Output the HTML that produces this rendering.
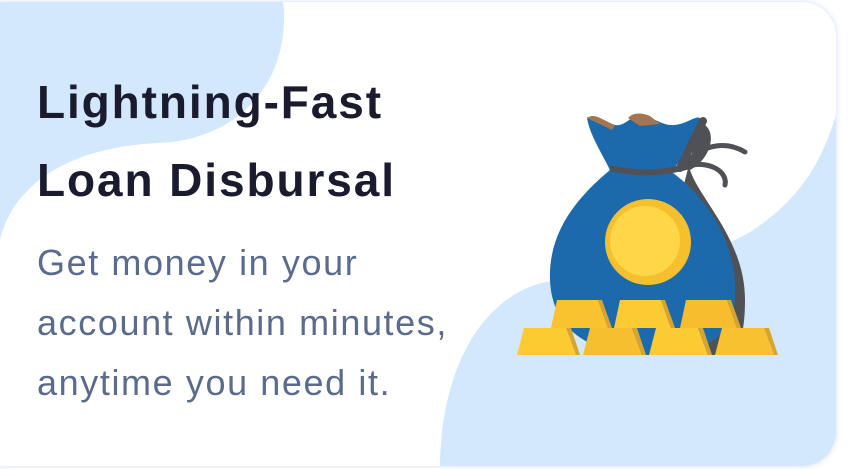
<!DOCTYPE html>
<html><head><style>
html,body{margin:0;padding:0;background:#fff;}
body{width:849px;height:469px;overflow:hidden;position:relative;font-family:"Liberation Sans",sans-serif;}
.card{position:absolute;left:-30px;top:2px;width:866px;height:464px;border-radius:34px;overflow:hidden;background:#fff;box-shadow:0 0 6px rgba(200,210,250,.8);}
svg.bg{position:absolute;left:0;top:0;}
h1{position:absolute;left:37px;top:63px;margin:0;font-size:46px;line-height:78px;font-weight:bold;color:#1a1b2e;letter-spacing:1.9px;}
p{position:absolute;left:37px;top:233px;margin:0;font-size:36px;line-height:60px;color:#5a6b8c;letter-spacing:1.6px;}
</style></head><body>
<div class="card"></div>
<svg class="bg" width="849" height="469" viewBox="0 0 849 469">
<defs><clipPath id="c"><rect x="-30" y="2" width="866" height="464" rx="34"/></clipPath></defs>
<g clip-path="url(#c)">
<path d="M0,0 H283 C292,80 240,140 158,143 C60,148 12,190 0,240 Z" fill="#d3e8fd"/>
<path d="M440,469 C440,360 490,285 560,280 C650,275 700,260 750,232 C800,200 825,160 840,100 V469 Z" fill="#d3e8fd"/>
</g>
<path d="M700,122 C720,130 710,160 690,170 C700,200 745,240 745,300 C745,330 740,350 730,355 L640,355 Z" fill="#505156"/>
<path d="M587,118 C595,112 605,122 615,125 C625,127 632,114 642,115 C650,116 660,124 670,125 C685,126 695,115 700,118 L702,128 C690,145 680,160 672,172 C715,205 738,250 735,300 C732,340 700,355 650,355 C590,355 552,330 550,280 C548,230 580,195 610,170 C600,150 590,135 587,118 Z" fill="#1c6aab"/>
<path d="M703,121 L680,168" stroke="#505156" stroke-width="8" stroke-linecap="round" fill="none"/>
<path d="M587,118 C595,112 605,122 615,125 L612,130 Z M628,118 C632,113 640,112 650,116 L660,124 L640,126 Z" fill="#a37650"/>
<path d="M610,168 C640,175 665,173 690,166" stroke="#505156" stroke-width="6" fill="none"/>
<path d="M685,165 C700,145 725,140 745,152" stroke="#505156" stroke-width="5" fill="none" stroke-linecap="round"/>
<path d="M687,166 C710,160 728,172 725,185" stroke="#505156" stroke-width="5" fill="none" stroke-linecap="round"/>
<circle cx="648" cy="242" r="43" fill="#f6bf2e"/>
<circle cx="645" cy="241" r="35" fill="#fdd748"/>
<g>
<path d="M557,300 H598 L608,328 H551 Z" fill="#f9c32f"/><path d="M598,300 H602 L612,328 H608 Z" fill="#d6a530"/>
<path d="M620,300 H661 L671,328 H614 Z" fill="#fcca32"/><path d="M661,300 H665 L675,328 H671 Z" fill="#d6a530"/>
<path d="M686,300 H727 L737,328 H680 Z" fill="#f6bd2f"/><path d="M727,300 H731 L741,328 H737 Z" fill="#d6a530"/>
<path d="M524,328 H566 L576,355 H517 Z" fill="#fccb32"/><path d="M566,328 H571 L580,355 H576 Z" fill="#d6a530"/>
<path d="M590,328 H632 L642,355 H583 Z" fill="#f6bf2f"/><path d="M632,328 H637 L646,355 H642 Z" fill="#d6a530"/>
<path d="M656,328 H698 L708,355 H649 Z" fill="#fcca32"/><path d="M698,328 H703 L712,355 H708 Z" fill="#d6a530"/>
<path d="M722,328 H764 L774,355 H715 Z" fill="#f7c130"/><path d="M764,328 H769 L778,355 H774 Z" fill="#d6a530"/>
</g>
</svg>
<h1>Lightning-Fast<br>Loan Disbursal</h1>
<p>Get money in your<br>account within minutes,<br>anytime you need it.</p>
</body></html>
